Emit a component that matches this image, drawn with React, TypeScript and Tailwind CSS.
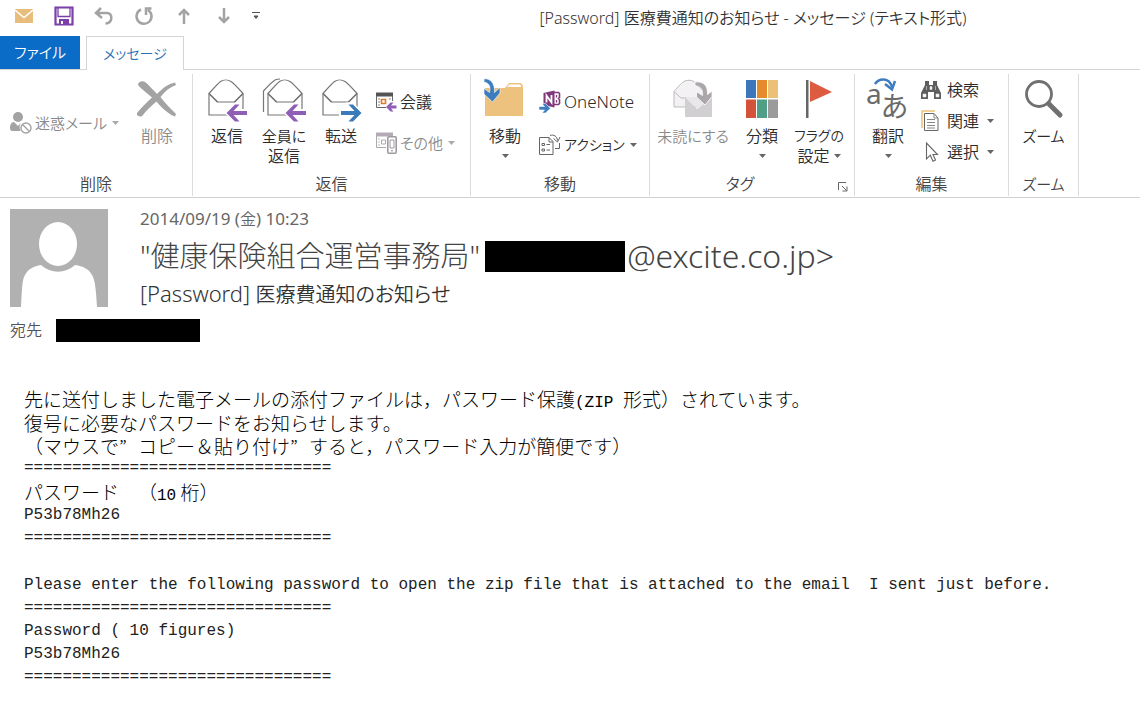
import type { ReactNode } from 'react';

const UI_FONT = "font-['Noto_Sans','Noto_Sans_CJK_JP',sans-serif]";

const Caret = ({ className = 'text-[#666]' }: { className?: string }) => (
  <svg width="7" height="4" viewBox="0 0 7 4" className={`shrink-0 ${className}`} aria-hidden="true">
    <path d="M0 0h7L3.5 4z" fill="currentColor" />
  </svg>
);

const JunkIcon = () => (
  <svg width="22" height="22" viewBox="0 0 22 22">
    <circle cx="8" cy="5" r="5" fill="#a3a3a3" />
    <path d="M0 16c0-4 2-6 4-6l4 4 3-3.500c-2 3-1.500 6-.5 8.500H2c-1 0-2-1-2-3z" fill="#a3a3a3" />
    <circle cx="16" cy="16" r="5" fill="#fff" stroke="#a3a3a3" strokeWidth="1.4" />
    <path d="M12.500 12.500l7 7" stroke="#a3a3a3" strokeWidth="1.4" />
  </svg>
);

const DeleteIcon = () => (
  <svg width="40" height="44" viewBox="0 0 40 44">
    <path
      d="M1 7c0-3 4-5 7-3 4 3 8 8 12 12C26 10 31 6 38 4.500l1 2.500c-6 2-11 6-15.500 12C28 25 34 31 39 36l-1 2.500C31 36 25 30 19.500 23.500 14 28 9 33 6 37c-2 3-7 1-6-2 4-5 9-10 15-15.500C10 15 4 11 1 7z"
      fill="#a3a3a3"
    />
  </svg>
);

const Envelope = () => (
  <g fill="#fff" stroke="#777" strokeWidth="1.2" strokeLinejoin="round">
    <path d="M3 15.500V37h34V15.500" />
    <path d="M3 15.500C7 11 12 5.500 14.500 3.500c3-2 7.500-2 10.500 0C28 5.500 33 11 37 15.500L28.500 24h-17z" />
    <path d="M3 15.500l8.500 8.500M37 15.500L28.500 24" fill="none" />
  </g>
);

const ArrowLeft = () => (
  <>
    <path d="M20 35l9-9h5l-6 6h13v6H28l6 6h-5z" fill="#fff" stroke="#fff" strokeWidth="2" />
    <path d="M20.500 35l8.500-8.500h4.500L27.500 33H41v4H27.500l6 6.500H29z" fill="#8f5fb5" />
  </>
);

const ReplyIcon = () => (
  <svg width="42" height="44" viewBox="0 0 42 44">
    <Envelope />
    <ArrowLeft />
  </svg>
);

const ReplyAllIcon = () => (
  <svg width="46" height="44" viewBox="-4 0 46 44">
    <path d="M-1.500 34V13C3 8 7 4 10 2c2-1 3.500-1 5-1" fill="none" stroke="#777" strokeWidth="1.2" />
    <Envelope />
    <ArrowLeft />
  </svg>
);

const ForwardIcon = () => (
  <svg width="42" height="44" viewBox="0 0 42 44">
    <Envelope />
    <path d="M42 35l-9-9.500h-5l6.500 6.500H20v6h14.500l-6 6H33z" fill="#fff" stroke="#fff" strokeWidth="2" />
    <path d="M41.500 35L33 26.500h-4.500l6 6.500H21v4h13.500l-6 6.500H33z" fill="#3b7ab8" />
  </svg>
);

const MeetingIcon = () => (
  <svg width="22" height="20" viewBox="0 0 22 20">
    <path d="M1 .5h17v4H1z" fill="#555" />
    <path d="M1.500 4v11.500H11M17.500 4v5" fill="none" stroke="#666" />
    <path d="M3 7h2M3 10h2M3 13h2M14 7h2" stroke="#888" />
    <path d="M6.500 7.500h4v4h-4z" fill="#fff" stroke="#e07b27" strokeWidth="1.600" />
    <path d="M11 15l4.500-4.500h3L16 13.500h5.500v3H16l2.500 3h-3z" fill="#8f5fb5" />
  </svg>
);

const MoreIcon = () => (
  <svg width="22" height="22" viewBox="0 0 22 22">
    <path d="M1 .5h17v4H1z" fill="#b5abb5" />
    <path d="M1.500 4v11.500H11" fill="none" stroke="#aaa" />
    <path d="M3 7h2M3 10h2M3 13h2" stroke="#bbb" />
    <path d="M6.500 8h4v4h-4z" fill="#fff" stroke="#aaa" />
    <rect x="12.800" y="4.800" width="8.400" height="16.400" rx="1" fill="#fff" stroke="#a09aa0" strokeWidth="1.600" />
    <path d="M15 8h4v8h-4z" fill="#fff" stroke="#a09aa0" />
    <path d="M16 18.800h2" stroke="#888" />
  </svg>
);

const MoveIcon = () => (
  <svg width="42" height="44" viewBox="0 0 42 44">
    <path d="M1 38V10h20l4-5h12l2 3v30z" fill="#edc27e" />
    <path d="M22 9.500L25.500 6h11l1.500 3.500z" fill="#fff" stroke="#edc27e" />
    <path
      d="M0 1c6-1 11 4 10.500 13.500L16 9.500v5.500l-7.500 9L0 16v-5.500l5.500 4C7 8 5 5 0 4z"
      fill="#3e7cc0"
      stroke="#fff"
      strokeWidth=".6"
    />
  </svg>
);

const OneNoteIcon = () => (
  <svg width="22" height="24" viewBox="0 0 22 24">
    <path d="M15 2.500h4.500l1 1v4l-1 1 1 1v4l-1 1H15" fill="#fff" stroke="#80397b" strokeWidth="1.600" />
    <path d="M17.500 5v2.500M17.500 10v2.500" stroke="#80397b" strokeWidth="1.300" />
    <path d="M4.500 3L15.500 .5v17L4.500 15z" fill="#80397b" />
    <path d="M7.500 12.500V5.500l5 7V5" fill="none" stroke="#fff" strokeWidth="1.800" />
    <path d="M0 16.500h5.500L3 13.500h3.500l5 4.800-5 4.700H3l2.500-3H0z" fill="#3e7cc0" stroke="#fff" strokeWidth=".6" />
  </svg>
);

const ActionIcon = () => (
  <svg width="22" height="22" viewBox="0 0 22 22" fill="none" stroke="#666">
    <path d="M.5 3.500H10l4 4v13H.5zM10 3.500V8h4" fill="#fff" />
    <path d="M3 9.500h2.500v2H3zM3 15h2.500v2H3zM7.500 10.500H11M7.500 16H11" />
    <path d="M11 1.500c4-1.500 7 1 7.500 5M14.500 4.500l4 3.500 2.500-5M16 14.500h4.500V9" />
  </svg>
);

const UnreadIcon = () => (
  <svg width="40" height="44" viewBox="0 0 40 44">
    <path d="M1 13.500C5 9 9 4 12 3c2-1 6-1 8 0l10 10v16H1z" fill="#f3f1f3" stroke="#bbb" />
    <path d="M1 13.500L8 20h10" fill="none" stroke="#bbb" />
    <path d="M12 19l12 12 15-12v20H12z" fill="#d2cfd2" />
    <path d="M12 19h27L25 31z" fill="#e9e7e9" />
    <path
      d="M22 4c9-1 13 4 12.500 12.500L39 13v5.500L32 27l-8.500-8v-5.500l6 4c.5-5.500-1-8.500-7.500-10z"
      fill="#aaa6aa"
      stroke="#fff"
      strokeWidth=".8"
    />
  </svg>
);

const CategoryIcon = () => (
  <svg width="32" height="44" viewBox="0 0 32 44">
    <path d="M0 2h10v18H0z" fill="#3e76bb" />
    <path d="M11 2h10v18H11z" fill="#e58b2e" />
    <path d="M22 2h10v18H22z" fill="#ecc077" />
    <path d="M0 21.500h10V40H0z" fill="#d3523a" />
    <path d="M11 21.500h10V40H11z" fill="#4e9f86" />
    <path d="M22 21.500h10V40H22z" fill="#9b9b9b" />
  </svg>
);

const FlagIcon = () => (
  <svg width="30" height="44" viewBox="0 0 30 44">
    <path d="M2 2h2.500v38H2z" fill="#666" />
    <path d="M6 3l22 11L6 24z" fill="#dc5b41" />
  </svg>
);

const TranslateIcon = () => (
  <svg width="42" height="44" viewBox="0 0 42 44" className="overflow-visible">
    <text x="-1" y="26" fontSize="28" fontWeight="400" fill="#6a6a6a" fontFamily="Noto Sans">a</text>
    <text x="14" y="39" fontSize="28" fontWeight="400" fill="#6a6a6a" fontFamily="Noto Sans CJK JP">あ</text>
    <path d="M8 6C12 0 22-1 25 9" fill="none" stroke="#3e7cc0" strokeWidth="2.500" />
    <path d="M18 6l7 5.500 3-8.500" fill="none" stroke="#3e7cc0" strokeWidth="2.500" />
  </svg>
);

const FindIcon = () => (
  <svg width="20" height="18" viewBox="0 0 20 18">
    <path d="M4 0h4v4h4V0h4v4l4 8v6h-7v-7H7v7H0v-6l4-8z" fill="#5e5e5e" />
    <path d="M2 13v3h3v-3zM15 13v3h3v-3zM9 5.500h2v3H9zM5.500 5v4M14.500 5v4" fill="#fff" stroke="#ddd" strokeWidth=".6" />
  </svg>
);

const RelatedIcon = () => (
  <svg width="20" height="22" viewBox="0 0 20 22">
    <path d="M1 18V1h13" fill="none" stroke="#ecc077" strokeWidth="1.500" />
    <path d="M3.500 3.500H13l4 4.500v12.500H3.500z" fill="#fff" stroke="#666" />
    <path d="M13 3.500V8h4M6 9.500h8M6 12.500h8M6 15.500h8M6 18h8" fill="none" stroke="#888" />
  </svg>
);

const SelectIcon = () => (
  <svg width="20" height="20" viewBox="0 0 20 20">
    <path d="M5.500 1v16l3.800-3.800 2.700 6 2.500-1.200-2.500-5.500h4.500z" fill="#fff" stroke="#666" strokeWidth="1.100" />
  </svg>
);

const ZoomIcon = () => (
  <svg width="40" height="44" viewBox="0 0 40 44" fill="none" stroke="#707070">
    <circle cx="15" cy="16" r="12.500" strokeWidth="2.800" />
    <path d="M25 26l11 11" strokeWidth="5" strokeLinecap="round" />
  </svg>
);

interface BigButtonProps {
  icon: ReactNode;
  label: string;
  second?: string;
  caret?: boolean;
  disabled?: boolean;
  className?: string;
}

const BigButton = ({ icon, label, second, caret, disabled, className = '' }: BigButtonProps) => (
  <button
    type="button"
    disabled={disabled}
    className={`flex shrink-0 flex-col items-center whitespace-nowrap leading-5 ${
      disabled ? 'text-[#8a8a8a]' : 'text-[#2b2b2b]'
    } ${className}`}
  >
    <span className="flex h-12 items-start justify-center">{icon}</span>
    <span>{label}</span>
    {(second || caret) && (
      <span className="flex h-5 items-center gap-1">
        {second && <span className="text-base leading-5">{second}</span>}
        {caret && <Caret />}
      </span>
    )}
  </button>
);

interface SmallButtonProps {
  icon: ReactNode;
  label: string;
  caret?: boolean;
  disabled?: boolean;
  className?: string;
}

const SmallButton = ({ icon, label, caret, disabled, className = 'gap-[3px]' }: SmallButtonProps) => (
  <button
    type="button"
    disabled={disabled}
    className={`flex items-center whitespace-nowrap leading-5 ${
      disabled ? 'text-[#8a8a8a]' : 'text-[#2b2b2b]'
    } ${className}`}
  >
    <span className="shrink-0">{icon}</span>
    <span>{label}</span>
    {caret && <Caret className={disabled ? 'ml-0.5 text-[#aaa]' : 'ml-0.5 text-[#666]'} />}
  </button>
);

interface GroupProps {
  label: string;
  className: string;
  launcher?: boolean;
  children: ReactNode;
}

const Group = ({ label, className, launcher, children }: GroupProps) => (
  <section aria-label={label} className={`relative flex shrink-0 flex-col border-r border-[#dcdcdc] ${className}`}>
    <div className="flex h-[98px] pt-1">{children}</div>
    <div className={`text-center leading-6 text-[#444] ${launcher ? 'pr-6' : ''}`}>{label}</div>
    {launcher && (
      <button type="button" aria-label={`${label}のオプション`} className="absolute right-1.5 bottom-1">
        <svg width="10" height="10" viewBox="0 0 10 10" fill="none" stroke="#666">
          <path d="M.5 8V.5H8M4 4l4.500 4.500M9 4.500V9H4.500" />
        </svg>
      </button>
    )}
  </section>
);

const QuickAccess = () => (
  <div className="flex w-[366px] shrink-0 items-center pb-1 pl-1">
    <button type="button" aria-label="メール" className="flex w-10 justify-center">
      <svg width="18" height="14" viewBox="0 0 18 14">
        <path d="M0 0h18v14H0z" fill="#e8bd7c" />
        <path d="M0 1l9 7.500L18 1" fill="none" stroke="#fff" strokeWidth="1.400" />
      </svg>
    </button>
    <button type="button" aria-label="保存" className="flex w-10 justify-center">
      <svg width="20" height="20" viewBox="0 0 20 20">
        <path d="M1.500 1.500h17v17h-17z" fill="#fff" stroke="#7a3fa8" strokeWidth="2.200" />
        <path d="M4 2v8.500h12V2" fill="none" stroke="#7a3fa8" strokeWidth="1.300" />
        <path d="M5 13h10v6H5z" fill="#7a3fa8" />
        <path d="M7 15h2v3H7z" fill="#fff" />
      </svg>
    </button>
    <button type="button" aria-label="元に戻す" className="flex w-10 justify-center">
      <svg width="20" height="18" viewBox="0 0 20 18" fill="none" stroke="#a3a3a3" strokeWidth="2.500">
        <path d="M7 1L2 6l6 5M2.500 6H13c6 0 6 10-1.500 10.500" />
      </svg>
    </button>
    <button type="button" aria-label="やり直し" className="flex w-10 justify-center">
      <svg width="20" height="20" viewBox="0 0 20 20" fill="none" stroke="#a3a3a3" strokeWidth="2.500">
        <path d="M7 3.500a7.500 7.500 0 1 0 7 .5M17.500 2.500H12V9" />
      </svg>
    </button>
    <button type="button" aria-label="前のアイテム" className="flex w-10 justify-center">
      <svg width="14" height="16" viewBox="0 0 14 16" fill="none" stroke="#a3a3a3" strokeWidth="2.500">
        <path d="M7 16V2M2 7l5-5 5 5" />
      </svg>
    </button>
    <button type="button" aria-label="次のアイテム" className="flex w-10 justify-center">
      <svg width="14" height="16" viewBox="0 0 14 16" fill="none" stroke="#a3a3a3" strokeWidth="2.500">
        <path d="M7 0v14M2 9l5 5 5-5" />
      </svg>
    </button>
    <button type="button" aria-label="カスタマイズ" className="flex w-6 justify-center">
      <svg width="8" height="8" viewBox="0 0 8 8">
        <path d="M0 .5h8M2 4h4L4 6.500z" fill="#555" stroke="#555" />
      </svg>
    </button>
  </div>
);

const Ribbon = () => (
  <div className="flex border-b border-[#d0d0d0] pt-1 pb-px text-base font-[350]">
    <Group label="削除" className="w-[193px]">
      <SmallButton
        icon={<JunkIcon />}
        label="迷惑メール"
        caret
        disabled
        className="w-[132px] gap-[3px] pb-1 pl-2.5 text-[15px]"
      />
      <BigButton icon={<DeleteIcon />} label="削除" disabled className="w-[50px]" />
    </Group>
    <Group label="返信" className="w-[278px]">
      <BigButton icon={<ReplyIcon />} label="返信" className="w-[68px]" />
      <BigButton icon={<ReplyAllIcon />} label="全員に" second="返信" className="w-[46px] text-[15px]" />
      <BigButton icon={<ForwardIcon />} label="転送" className="w-[68px]" />
      <div className="flex flex-col gap-5 pt-3.5">
        <SmallButton icon={<MeetingIcon />} label="会議" />
        <SmallButton icon={<MoreIcon />} label="その他" caret disabled className="gap-[3px] text-[15px]" />
      </div>
    </Group>
    <Group label="移動" className="w-[179px]">
      <BigButton icon={<MoveIcon />} label="移動" caret className="w-[68px]" />
      <div className="flex flex-col gap-5 pt-3">
        <SmallButton icon={<OneNoteIcon />} label="OneNote" className="gap-[3px] text-[17px]" />
        <SmallButton icon={<ActionIcon />} label="アクション" caret className="gap-[3px] text-[14px]" />
      </div>
    </Group>
    <Group label="タグ" className="w-[205px]" launcher>
      <BigButton icon={<UnreadIcon />} label="未読にする" disabled className="w-[86px] text-[15px]" />
      <BigButton icon={<CategoryIcon />} label="分類" caret className="w-[52px]" />
      <BigButton icon={<FlagIcon />} label="フラグの" second="設定" caret className="w-[62px] text-[14px]" />
    </Group>
    <Group label="編集" className="w-[154px]">
      <BigButton icon={<TranslateIcon />} label="翻訳" caret className="w-[66px]" />
      <div className="flex flex-col gap-2.5 pt-0.5">
        <SmallButton icon={<FindIcon />} label="検索" className="gap-1.5" />
        <SmallButton icon={<RelatedIcon />} label="関連" caret className="gap-1.5" />
        <SmallButton icon={<SelectIcon />} label="選択" caret className="gap-1.5" />
      </div>
    </Group>
    <Group label="ズーム" className="w-[70px] text-[15px]">
      <BigButton icon={<ZoomIcon />} label="ズーム" className="w-full" />
    </Group>
  </div>
);

const MessageHeader = () => (
  <header className="px-2.5 pt-2.5">
    <div className="flex gap-8">
      <svg width="98" height="98" viewBox="0 0 98 98" className="mt-px shrink-0" role="img" aria-label="差出人">
        <path d="M0 0h98v98H0z" fill="#b1b1b1" />
        <ellipse cx="48" cy="35" rx="19" ry="22" fill="#fff" />
        <path d="M11 98c1-18 1-27 4-32 3-6 9-9 16-10 10 9 24 9 34 0 8 1 14 4 17 10 3 5 4 14 5 32z" fill="#fff" />
      </svg>
      <div className="whitespace-nowrap">
        <div className="text-[17px] leading-[22px] text-[#666]">
          2014/09/19 (<span className="text-base leading-[22px] font-[350]">金</span>) 10:23
        </div>
        <div className="flex items-center pt-1.5 text-[29px] leading-10 font-light text-[#444]">
          <span>&quot;健康保険組合運営事務局&quot;</span>
          <span className="ml-[5px] h-[31px] w-[140px] bg-black" />
          <span className="ml-0.5 text-[32px] leading-10">@excite.co.jp&gt;</span>
        </div>
        <h1 className="pt-px text-[21px] leading-8 font-[350] text-[#333]">
          <span className="text-[22px] leading-8">[Password]</span>{' '}
          <span className="text-[20px] leading-8">医療費通知のお知らせ</span>
        </h1>
      </div>
    </div>
    <div className="flex items-center gap-3.5 pt-[7px] text-base font-[350] text-[#555]">
      <span>宛先</span>
      <span className="h-[23px] w-36 bg-black" />
    </div>
  </header>
);

const RULE = '================================';

// Half-width runs inside the Japanese lines
const Half = ({ children }: { children: ReactNode }) => (
  <span className="font-['Liberation_Mono',monospace] text-base leading-none">{children}</span>
);

// The closing quote takes one full-width cell
const Quote = () => <span className="inline-block w-[19px] leading-none">”</span>;

const MessageBody = () => (
  <main className="flex flex-col gap-6 px-6 pt-[45px] pb-3 font-['Liberation_Mono','Noto_Sans_CJK_JP',monospace] text-base text-[#222] [text-spacing-trim:space-all]">
    <div className="leading-[23px] whitespace-pre">
      <div className="font-['Noto_Sans_CJK_JP',sans-serif] text-[19px] leading-[23px] font-light text-black">
        <p>
          先に送付しました電子メールの添付ファイルは，パスワード保護<Half>(ZIP </Half>形式）されています。
        </p>
        <p>復号に必要なパスワードをお知らせします。</p>
        <p>
          （マウスで
          <Quote />
          コピー＆貼り付け
          <Quote />
          すると，パスワード入力が簡便です）
        </p>
      </div>
      <p>{RULE}</p>
      <p className="font-['Noto_Sans_CJK_JP',sans-serif] text-[19px] leading-[23px] font-light text-black">
        パスワード　（<Half>10</Half> 桁）
      </p>
      <p>P53b78Mh26</p>
      <p>{RULE}</p>
    </div>
    <div className="leading-[23px] whitespace-pre">
      <p>Please enter the following password to open the zip file that is attached to the email  I sent just before.</p>
      <p>{RULE}</p>
      <p>Password ( 10 figures)</p>
      <p>P53b78Mh26</p>
      <p>{RULE}</p>
    </div>
  </main>
);

const App = () => (
  <div lang="ja" className="min-h-screen overflow-x-hidden bg-white">
    <div className={`${UI_FONT} [font-feature-settings:'palt']`}>
      <div className="flex h-9 items-center">
        <QuickAccess />
        <div className="flex-1 text-center text-base font-[350] whitespace-nowrap text-[#333]">
          [Password] 医療費通知のお知らせ - メッセージ (テキスト形式)
        </div>
      </div>
      <nav className="flex gap-1.5 border-b border-[#d5d5d5] text-[15px] font-[350]">
        <button type="button" className="h-[33px] w-20 bg-[#0a6cc7] text-white">
          ファイル
        </button>
        <button
          type="button"
          className="-mb-px h-[34px] w-[98px] border border-b-0 border-[#d5d5d5] bg-white text-[14px] text-[#2a6fb5]"
        >
          メッセージ
        </button>
      </nav>
      <Ribbon />
      <MessageHeader />
    </div>
    <MessageBody />
  </div>
);

export default App;
